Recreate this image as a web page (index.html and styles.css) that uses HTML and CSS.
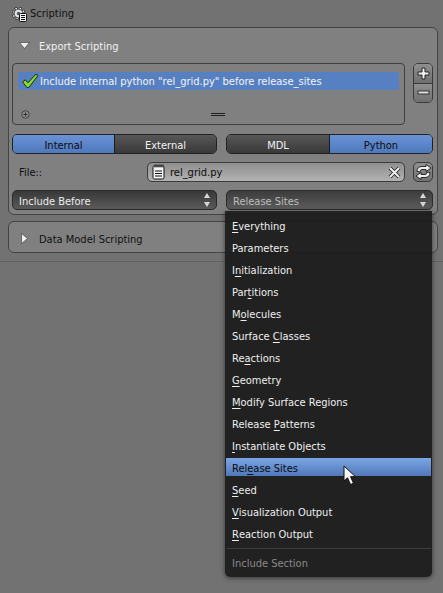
FILE: index.html
```html
<!DOCTYPE html>
<html lang="en">
<head>
<meta charset="utf-8">
<title>Scripting</title>
<link rel="stylesheet" href="styles.css">
</head>
<body>
<div class="app">
  <header class="title">
    <svg class="title-icon" width="15" height="15" viewBox="0 0 15 15">
      <circle cx="6.500" cy="6.500" r="5.200" fill="none" stroke="#1c1c1c" stroke-width="3" stroke-dasharray="2.300 1.780"/>
      <circle cx="6.500" cy="6.500" r="5.200" fill="none" stroke="#ececec" stroke-width="1.800" stroke-dasharray="1.500 2.580" stroke-dashoffset="-.4"/>
      <circle cx="6.500" cy="6.500" r="4.300" fill="#e4e4e4" stroke="#1c1c1c" stroke-width=".6"/>
      <circle cx="6.500" cy="6.500" r="1.700" fill="#555"/>
      <rect x="7.500" y="6.500" width="7" height="8" rx=".8" fill="#f4f4f4" stroke="#111"/>
      <path d="M9 8.500h4M9 10.500h4M9 12.500h4" stroke="#111" stroke-width="1"/>
    </svg>
    <span>Scripting</span>
  </header>
  <section class="panel export">
    <div class="panel-head">
      <svg class="arrow" width="11" height="7" viewBox="0 0 11 7"><path d="M.5.500h10L5.500 6.500z" fill="#f0f0f0" stroke="#333" stroke-width=".6"/></svg>
      <span class="head-light">Export Scripting</span>
    </div>
    <div class="list-row">
      <div class="list">
        <div class="list-item">
          <svg class="check" width="18" height="16" viewBox="0 0 18 16"><path d="M1.500 9l2.800-2.200 2.700 3L14.800 1.200l2.200 1.300L7.800 14.500H6z" fill="#86d92e" stroke="#1b2a0c" stroke-width="1"/></svg>
          <span>Include internal python "rel_grid.py" before release_sites</span>
        </div>
        <div class="list-foot">
          <svg class="plus-dot" width="9" height="9" viewBox="0 0 9 9"><circle cx="4.500" cy="4.500" r="3.800" fill="#8a8a8a" stroke="#444"/><path d="M4.500 2.500v4M2.500 4.500h4" stroke="#333"/></svg>
          <div class="grip"></div>
        </div>
      </div>
      <div class="addrem">
        <button class="addrem-btn"><svg width="13" height="13" viewBox="0 0 13 13"><path d="M5 1h3v4h4v3H8v4H5V8H1V5h4z" fill="#f2f2f2" stroke="#222"/></svg></button>
        <button class="addrem-btn"><svg width="13" height="5" viewBox="0 0 13 5"><rect x="1" y="1" width="11" height="3" fill="#e0e0e0" stroke="#333"/></svg></button>
      </div>
    </div>
    <div class="toggles">
      <div class="seg">
        <button class="seg-btn on">Internal</button>
        <button class="seg-btn">External</button>
      </div>
      <div class="seg">
        <button class="seg-btn">MDL</button>
        <button class="seg-btn on">Python</button>
      </div>
    </div>
    <div class="file-row">
      <label class="file-label">File::</label>
      <div class="file-field">
        <svg class="doc" width="13" height="16" viewBox="0 0 13 16"><rect x="1" y="2" width="11" height="13" rx="1.500" fill="#f4f4f4" stroke="#111"/><path d="M3 .500v3M5 .500v3M7 .500v3M9 .500v3M11 .500v3" stroke="#222"/><path d="M3 7h7M3 9.500h7M3 12h7" stroke="#111"/></svg>
        <span class="file-name">rel_grid.py</span>
        <svg class="clear" width="13" height="13" viewBox="0 0 13 13"><path d="M2 2l9 9M11 2l-9 9" stroke="#222" stroke-width="3.800"/><path d="M2 2l9 9M11 2l-9 9" stroke="#f2f2f2" stroke-width="2"/></svg>
      </div>
      <button class="reload"><svg width="17" height="16" viewBox="0 0 17 16"><path d="M2 7.500C2 4 4 2.500 7 2.500h4V.500l5 3.500-5 3.500V5.500H7C5.500 5.500 5 6.500 5 8zM15 8.500c0 3.500-2 5-5 5H6v2L1 12l5-3.500v2h4c1.500 0 2-1 2-2.500z" fill="#f0f0f0" stroke="#1a1a1a" stroke-width=".9"/></svg></button>
    </div>
    <div class="select-row">
      <div class="select"><span class="select-text">Include Before</span><span class="updown"></span></div>
      <div class="select open"><span class="select-text">Release Sites</span><span class="updown"></span></div>
    </div>
  </section>
  <section class="panel closed">
    <svg class="arrow-r" width="7" height="11" viewBox="0 0 7 11"><path d="M.5.500v10l6-5z" fill="#f0f0f0" stroke="#333" stroke-width=".6"/></svg>
    <span>Data Model Scripting</span>
  </section>
  <div class="region-edge"></div>
  <ul class="menu">
    <li class="menu-item"><u>E</u>verything</li>
    <li class="menu-item">Parameters</li>
    <li class="menu-item">I<u>n</u>itialization</li>
    <li class="menu-item">Par<u>t</u>itions</li>
    <li class="menu-item">M<u>o</u>lecules</li>
    <li class="menu-item">Surface <u>C</u>lasses</li>
    <li class="menu-item">Re<u>a</u>ctions</li>
    <li class="menu-item"><u>G</u>eometry</li>
    <li class="menu-item"><u>M</u>odify Surface Regions</li>
    <li class="menu-item">Release <u>P</u>atterns</li>
    <li class="menu-item"><u>I</u>nstantiate Objects</li>
    <li class="menu-item active">Rel<u>e</u>ase Sites</li>
    <li class="menu-item"><u>S</u>eed</li>
    <li class="menu-item"><u>V</u>isualization Output</li>
    <li class="menu-item"><u>R</u>eaction Output</li>
    <li class="menu-sep"></li>
    <li class="menu-title">Include Section</li>
  </ul>
  <svg class="cursor" width="15" height="21" viewBox="0 0 15 21"><path d="M1 1v15l3.500-3.200L7.500 19.500l3-1.300-3-6.500H12.500z" fill="#f4f4f4" stroke="#111" stroke-width="1"/></svg>
</div>
</body>
</html>
```
FILE: styles.css
```css
* { box-sizing: border-box; }
html, body { margin: 0; padding: 0; }
body {
  width: 443px; height: 593px; overflow: hidden;
  font: 11px/13px "DejaVu Sans Condensed", "DejaVu Sans", sans-serif;
  font-stretch: condensed;
  color: #000;
  background: #727272;
}
.app { position: relative; width: 443px; height: 593px; overflow: hidden; }
.title {
  height: 27px; padding: 0 0 0 12px;
  display: flex; align-items: center; gap: 3px;
  color: #111;
}
.title-icon { display: block; margin-top: 1px; }
.panel {
  margin: 0 5px 0 8px;
  border: 1px solid #444;
  border-radius: 6px;
  background: #808080;
}
.export { height: 188px; padding: 0 4px 0 3px; }
.panel-head {
  height: 35px; padding-left: 7px;
  display: flex; align-items: center; gap: 9px;
}
.arrow { display: block; }
.head-light { color: #f0f0f0; padding-top: 2px; }
.list-row { display: flex; gap: 8px; }
.list {
  width: 393px; height: 62px;
  border: 1px solid #3f3f3f; border-radius: 4px;
  padding: 8px 5px 0;
  display: flex; flex-direction: column;
}
.list-item {
  height: 18px; border-radius: 2px; background: #5680c2;
  color: #f4f4f4;
  display: flex; align-items: center; padding-left: 3px; gap: 1px;
}
.check { display: block; }
.list-foot { flex: 1; display: flex; align-items: center; padding: 15px 0 0 3px; }
.plus-dot { display: block; }
.grip {
  width: 14px; height: 3px; margin-left: 181px;
  border-top: 1px solid #222; border-bottom: 1px solid #222;
}
.addrem {
  width: 20px; height: 40px; display: flex; flex-direction: column;
  border: 1px solid #3a3a3a; border-radius: 5px; overflow: hidden;
}
.addrem-btn {
  flex: 1; padding: 0; border: 0; display: flex; align-items: center; justify-content: center;
  background: linear-gradient(#8f8f8f, #6f6f6f);
}
.addrem-btn + .addrem-btn { border-top: 1px solid #3a3a3a; }
.toggles { display: flex; gap: 9px; margin-top: 9px; }
.seg {
  flex: 0 0 205px; height: 20px; display: flex;
  border: 1px solid #222; border-radius: 5px; overflow: hidden;
}
.seg + .seg { flex-basis: 207px; }
.seg-btn {
  flex: 1; padding: 2px 0 0; border: 0;
  font: inherit; font-stretch: condensed; color: #f2f2f2;
  background: linear-gradient(#575757, #393939);
}
.seg-btn.on { color: #0c0c0c; background: linear-gradient(#6a93d6, #4f79bd); }
.seg-btn + .seg-btn { border-left: 1px solid #1c1c1c; }
.file-row { display: flex; align-items: center; margin-top: 8px; height: 20px; }
.file-label { width: 135px; padding-left: 7px; color: #111; }
.file-field {
  width: 258px; height: 20px; padding: 0 3px 0 4px;
  display: flex; align-items: center; gap: 5px;
  border: 1px solid #3c3c3c; border-radius: 5px;
  background: linear-gradient(#8f8f8f, #b2b2b2);
}
.doc { display: block; }
.file-name { flex: 1; color: #0c0c0c; }
.reload {
  width: 20px; height: 20px; margin-left: 8px; padding: 0;
  display: flex; align-items: center; justify-content: center;
  border: 1px solid #3a3a3a; border-radius: 5px;
  background: linear-gradient(#919191, #717171);
}
.select-row { display: flex; gap: 9px; margin-top: 8px; }
.select {
  flex: 0 0 205px; height: 20px; padding: 0 6px;
  display: flex; align-items: center; justify-content: space-between;
  border: 1px solid #2a2a2a; border-radius: 5px;
  background: linear-gradient(#383838, #5a5a5a);
  color: #eee;
}
.select-text { padding-top: 2px; }
.select.open { flex-basis: 207px; color: #bdbdbd; background: linear-gradient(#3c3c3c, #5c5c5c); }
.updown { position: relative; width: 7px; height: 14px; margin-right: -1px; }
.updown::before, .updown::after {
  content: ""; position: absolute; left: 0;
  border-left: 3.500px solid transparent; border-right: 3.500px solid transparent;
}
.updown::before { top: 0; border-bottom: 5px solid #d8d8d8; }
.updown::after { bottom: 0; border-top: 5px solid #d8d8d8; }
.closed {
  height: 32px; margin-top: 6px; padding: 0 0 0 12px;
  display: flex; align-items: center; gap: 11px; color: #111;
}
.closed span { padding-top: 5px; }
.arrow-r { display: block; margin-top: 3px; }
.region-edge { height: 1px; margin-top: 8px; background: #626262; }
.menu {
  position: absolute; left: 225px; top: 211px; width: 207px; height: 366px;
  margin: 0; padding: 4px 1px 0; list-style: none;
  background: rgba(28, 28, 28, .95); border-radius: 0 0 5px 5px;
  box-shadow: 0 1px 5px rgba(0, 0, 0, .55);
  color: #efefef;
}
.menu-item { height: 22px; padding-left: 6px; display: flex; align-items: center; white-space: pre; }
.menu-item u { text-underline-offset: 2px; }
.menu-item.active { height: 18px; margin: 1px 0 3px; padding-top: 2px; color: #0a0a0a; background: linear-gradient(#7ba6e6, #4f78b8); }
.menu-sep { height: 1px; margin: 3px 0 0; background: #3e3e3e; }
.menu-title { height: 28px; padding-left: 6px; display: flex; align-items: center; color: #8a8a8a; }
.cursor { position: absolute; left: 343px; top: 465px; display: block; }
```
